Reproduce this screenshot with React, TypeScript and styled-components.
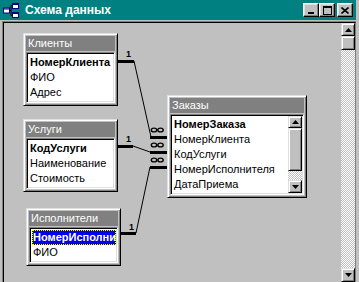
import React from "react";
import styled, { createGlobalStyle } from "styled-components";

const GlobalStyle = createGlobalStyle`
  html, body {
    margin: 0;
    padding: 0;
    background: #c0c0c0;
  }
  body {
    font-family: "Liberation Sans", Arial, sans-serif;
    font-size: 11px;
  }
`;

const Window = styled.div`
  width: 359px;
  height: 282px;
  overflow: hidden;
  background: #c0c0c0;
  display: flex;
  flex-direction: column;
`;

const TitleBar = styled.div`
  width: 356px;
  height: 20px;
  flex: none;
  box-sizing: border-box;
  background: #008080;
  display: flex;
  align-items: center;
  padding: 0 3px 0 3px;
  color: #fff;
`;

const Caption = styled.span`
  margin-left: 6px;
  font-size: 12px;
  font-weight: bold;
  flex: 1;
`;

const TitleButton = styled.div<{ $gap?: number }>`
  width: 16px;
  height: 14px;
  box-sizing: border-box;
  margin-left: ${(p) => p.$gap ?? 0}px;
  background: #c0c0c0;
  border: 1px solid;
  border-color: #fff #000 #000 #fff;
  box-shadow: inset -1px -1px #808080, inset 1px 1px #dfdfdf;
  display: flex;
  align-items: center;
  justify-content: center;
`;

const Body = styled.div`
  flex: 1;
  display: flex;
  padding: 1px 3px 0 2px;
  min-height: 0;
`;

const Frame = styled.div`
  flex: 1;
  display: flex;
  border-top: 1px solid #808080;
  border-left: 1px solid #808080;
`;

const Client = styled.div`
  flex: 1;
  display: flex;
  border-top: 1px solid #000;
  border-left: 1px solid #000;
  border-right: 1px solid #808080;
`;

const Canvas = styled.div`
  position: relative;
  flex: 1;
  overflow: hidden;
`;

const Links = styled.svg`
  position: absolute;
  left: 0;
  top: 0;
  pointer-events: none;
`;

const ScrollBar = styled.div<{ $w: number }>`
  width: ${(p) => p.$w}px;
  flex: none;
  display: flex;
  flex-direction: column;
`;

const ScrollButton = styled.div<{ $h: number }>`
  height: ${(p) => p.$h}px;
  flex: none;
  box-sizing: border-box;
  background: #c0c0c0;
  border: 1px solid;
  border-color: #dfdfdf #000 #000 #dfdfdf;
  box-shadow: inset 1px 1px #fff, inset -1px -1px #808080;
  display: flex;
  align-items: center;
  justify-content: center;
`;

const Track = styled.div`
  flex: 1;
  background: repeating-conic-gradient(#fff 0 25%, #c0c0c0 0 50%) 0 0 / 2px 2px;
`;

const TableBox = styled.div<{ $x: number; $y: number; $w: number }>`
  position: absolute;
  left: ${(p) => p.$x}px;
  top: ${(p) => p.$y}px;
  width: ${(p) => p.$w}px;
  box-sizing: border-box;
  background: #c0c0c0;
  border: 1px solid;
  border-color: #dfdfdf #000 #000 #dfdfdf;
  box-shadow: inset 1px 1px #fff, inset -1px -1px #808080;
  padding: 2px;
`;

const TableTitle = styled.div`
  height: 15px;
  line-height: 15px;
  background: #808080;
  color: #fff;
  padding-left: 2px;
  font-size: 11px;
  white-space: nowrap;
  overflow: hidden;
`;

const FieldList = styled.div`
  margin-top: 1px;
  background: #fff;
  border: 1px solid;
  border-color: #808080 #fff #fff #808080;
  box-shadow: inset 1px 1px #000, inset -1px -1px #dfdfdf;
  padding: 1px;
  display: flex;
`;

const Rows = styled.div`
  flex: 1;
  min-width: 0;
  padding: 1px 0 1px 1px;
`;

const Row = styled.div<{ $key?: boolean; $selected?: boolean }>`
  height: 15px;
  line-height: 15px;
  padding-left: 1px;
  white-space: nowrap;
  overflow: hidden;
  color: ${(p) => (p.$selected ? "#fff" : "#000")};
  font-weight: ${(p) => (p.$key ? "bold" : "normal")};
  background: ${(p) => (p.$selected ? "#0000f0" : "transparent")};
  outline: ${(p) => (p.$selected ? "1px dotted #ffff00" : "none")};
  outline-offset: -1px;
`;

const Arrow = ({ down }: { down?: boolean }) => (
  <svg width="7" height="4" viewBox="0 0 7 4">
    <polygon points={down ? "0,0 7,0 3.5,4" : "0,4 7,4 3.5,0"} fill="#000" />
  </svg>
);

type Table = {
  name: string;
  x: number;
  y: number;
  w: number;
  fields: string[];
  selected?: number;
  scroll?: boolean;
};

// page coords minus canvas origin (4, 23)
const tables: Table[] = [
  { name: "Клиенты", x: 19, y: 10, w: 95, fields: ["НомерКлиента", "ФИО", "Адрес"] },
  { name: "Услуги", x: 19, y: 96, w: 95, fields: ["КодУслуги", "Наименование", "Стоимость"] },
  { name: "Исполнители", x: 22, y: 185, w: 95, fields: ["НомерИсполнителя", "ФИО"], selected: 0 },
  {
    name: "Заказы",
    x: 163,
    y: 72,
    w: 140,
    fields: ["НомерЗаказа", "НомерКлиента", "КодУслуги", "НомерИсполнителя", "ДатаПриема"],
    scroll: true,
  },
];

const links = [
  { from: [118, 61, 134], mid: [151, 137], to: [150, 137, 167], one: [126, 57], many: 130 },
  { from: [118, 146, 133], mid: [150, 152], to: [150, 152, 167], one: [126, 142], many: 145 },
  { from: [120, 233, 136], mid: [150, 167], to: [150, 167, 167], one: [129, 230], many: 160 },
];

function TableView({ t }: { t: Table }) {
  return (
    <TableBox $x={t.x} $y={t.y} $w={t.w}>
      <TableTitle>{t.name}</TableTitle>
      <FieldList>
        <Rows>
          {t.fields.map((f, i) => (
            <Row key={f} $key={i === 0} $selected={t.selected === i}>
              {f}
            </Row>
          ))}
        </Rows>
        {t.scroll && (
          <ScrollBar $w={14}>
            <ScrollButton $h={12}>
              <Arrow />
            </ScrollButton>
            <ScrollButton $h={43} />
            <Track />
            <ScrollButton $h={13}>
              <Arrow down />
            </ScrollButton>
          </ScrollBar>
        )}
      </FieldList>
    </TableBox>
  );
}

function RelIcon() {
  return (
    <svg width="16" height="15" viewBox="0 0 16 15">
      <path d="M6 7.5H8M8 2.5V12.5M8 2.5H10M8 12.5H10" stroke="#000" strokeWidth="1" fill="none" />
      <rect x="0.5" y="5" width="6" height="5" fill="#fff" stroke="#000080" />
      <rect x="9.5" y="0.5" width="6" height="5" fill="#fff" stroke="#000080" />
      <rect x="9.5" y="9.5" width="6" height="5" fill="#fff" stroke="#000080" />
      <rect x="1" y="5.5" width="5" height="1" fill="#000080" />
      <rect x="10" y="1" width="5" height="1" fill="#000080" />
      <rect x="10" y="10" width="5" height="1" fill="#000080" />
    </svg>
  );
}

export default function App() {
  return (
    <>
      <GlobalStyle />
      <Window>
        <TitleBar>
          <RelIcon />
          <Caption>Схема данных</Caption>
          <TitleButton>
            <svg width="8" height="7" viewBox="0 0 8 7">
              <rect x="1" y="5" width="6" height="2" fill="#000" />
            </svg>
          </TitleButton>
          <TitleButton>
            <svg width="9" height="9" viewBox="0 0 9 9">
              <rect x="0.5" y="0.5" width="8" height="8" fill="none" stroke="#000" />
              <rect x="0" y="0" width="9" height="2" fill="#000" />
            </svg>
          </TitleButton>
          <TitleButton $gap={2}>
            <svg width="8" height="7" viewBox="0 0 8 7">
              <path d="M0.5 0.5L7.5 6.5M7.5 0.5L0.5 6.5" stroke="#000" strokeWidth="1.6" />
            </svg>
          </TitleButton>
        </TitleBar>
        <Body>
          <Frame>
            <Client>
              <Canvas>
                <Links width="337" height="259">
                  <g transform="translate(-4 -23)" stroke="#000" fill="none" shapeRendering="crispEdges">
                    {links.map((l, i) => (
                      <g key={i}>
                        <line x1={l.from[0]} y1={l.from[1]} x2={l.from[2]} y2={l.from[1]} strokeWidth="3" />
                        <line x1={l.to[0]} y1={l.to[1]} x2={l.to[2]} y2={l.to[1]} strokeWidth="3" />
                        <line
                          x1={l.from[2]}
                          y1={l.from[1]}
                          x2={l.mid[0]}
                          y2={l.mid[1]}
                          strokeWidth="1"
                          shapeRendering="auto"
                        />
                        <ellipse cx="154" cy={l.many} rx="2.7" ry="1.9" strokeWidth="1.4" shapeRendering="auto" />
                        <ellipse cx="160.5" cy={l.many} rx="2.7" ry="1.9" strokeWidth="1.4" shapeRendering="auto" />
                        <text
                          x={l.one[0]}
                          y={l.one[1]}
                          fill="#000"
                          stroke="none"
                          fontSize="9"
                          fontWeight="bold"
                          fontFamily="Liberation Sans, Arial, sans-serif"
                        >
                          1
                        </text>
                      </g>
                    ))}
                  </g>
                </Links>
                {tables.map((t) => (
                  <TableView key={t.name} t={t} />
                ))}
              </Canvas>
              <ScrollBar $w={14}>
                <ScrollButton $h={13}>
                  <Arrow />
                </ScrollButton>
                <ScrollButton $h={14} />
                <Track />
                <ScrollButton $h={14}>
                  <Arrow down />
                </ScrollButton>
              </ScrollBar>
            </Client>
          </Frame>
        </Body>
      </Window>
    </>
  );
}
